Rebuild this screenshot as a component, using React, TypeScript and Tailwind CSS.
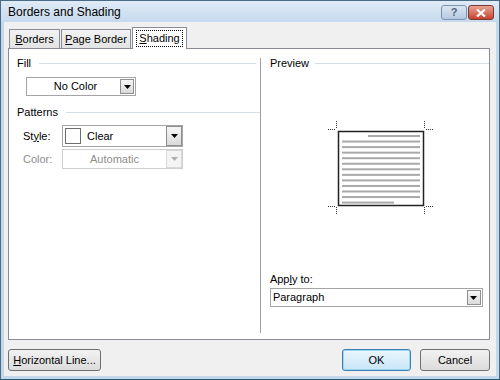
import React from "react";

const font = { fontFamily: '"Segoe UI", "Liberation Sans", Arial, sans-serif' };

function Arrow({ disabled = false }: { disabled?: boolean }) {
  return (
    <svg width="7" height="4" viewBox="0 0 7 4">
      <path d="M0 0 H7 L3.5 4 Z" fill={disabled ? "#b0b0b0" : "#000"} />
    </svg>
  );
}

function ArrowBtn({ disabled = false, className = "" }: { disabled?: boolean; className?: string }) {
  return (
    <div
      className={
        "flex items-center justify-center border " +
        (disabled
          ? "border-[#d8d8d8] bg-[#f4f4f4] "
          : "border-[#8f8f8f] bg-gradient-to-b from-[#f6f6f6] to-[#dadada] ") +
        className
      }
    >
      <Arrow disabled={disabled} />
    </div>
  );
}

function GroupLabel({ label, lineClass }: { label: string; lineClass: string }) {
  return (
    <div className="flex items-center h-[13px]">
      <span className="text-[11px] leading-[13px] text-black">{label}</span>
      <div className={"h-px bg-[#d5dfe5] " + lineClass} />
    </div>
  );
}

function PreviewGraphic() {
  const lines: React.ReactNode[] = [];
  for (let i = 0; i < 13; i++) {
    const y = 4 + i * 5.55;
    let x1 = 4;
    let x2 = 82;
    if (i === 0) x1 = 30;
    if (i === 12) x2 = 56;
    lines.push(<rect key={i} x={x1} y={y} width={x2 - x1} height={2} fill="#a9a9a9" />);
  }
  const dot = "#333";
  return (
    <svg width="110" height="96" viewBox="-12 -12 110 96" className="overflow-visible">
      <g stroke={dot} strokeWidth="1" strokeDasharray="1 1" shapeRendering="crispEdges">
        <line x1="-10" y1="-1.5" x2="-2" y2="-1.5" />
        <line x1="-1.5" y1="-10" x2="-1.5" y2="-2" />
        <line x1="88" y1="-1.5" x2="96" y2="-1.5" />
        <line x1="86.5" y1="-10" x2="86.5" y2="-2" />
        <line x1="-10" y1="75.5" x2="-2" y2="75.5" />
        <line x1="-1.5" y1="76" x2="-1.5" y2="84" />
        <line x1="88" y1="75.5" x2="96" y2="75.5" />
        <line x1="86.5" y1="76" x2="86.5" y2="84" />
      </g>
      <rect x="0.5" y="0.5" width="85" height="74" fill="#fff" stroke="#222" strokeWidth="1.5" />
      {lines}
    </svg>
  );
}

export default function App() {
  return (
    <div
      className="w-[500px] h-[380px] flex flex-col bg-[#c4d8ec] border border-[#4b6a88] border-b-[#1f5a6e] text-black overflow-hidden"
      style={font}
    >
      {/* Title bar */}
      <div className="h-[21px] flex items-center justify-between pl-[7px] pr-[5px] bg-gradient-to-b from-[#e0ebf7] to-[#c6d9ed]">
        <span className="text-[12px] leading-none text-black">Borders and Shading</span>
        <div className="flex items-start gap-[1px] self-start mt-[4px]">
          <div className="w-[26px] h-[15px] rounded-[3px] border border-[#7c93b0] bg-gradient-to-b from-[#dbe6f3] to-[#b4c9e0] flex items-center justify-center">
            <span className="text-[11px] leading-none font-bold text-[#4d6785]">?</span>
          </div>
          <div className="w-[26px] h-[15px] rounded-[3px] border border-[#7a3a30] bg-gradient-to-b from-[#e8a293] to-[#c5412c] flex items-center justify-center">
            <svg width="10" height="8" viewBox="0 0 10 8">
              <path d="M1 0.5 L9 7.5 M9 0.5 L1 7.5" stroke="#fff" strokeWidth="2.2" />
            </svg>
          </div>
        </div>
      </div>

      {/* Content */}
      <div className="flex-1 mx-[3px] mb-[3px] bg-[#f0f0f0] flex flex-col">
        {/* Tabs */}
        <div className="h-[26px] flex items-end pl-[5px]">
          <div className="h-[19px] w-[51px] border border-b-0 border-[#898c95] bg-gradient-to-b from-[#f2f2f2] to-[#e3e3e3] flex items-center justify-center text-[11px] leading-none">
            <span><u>B</u>orders</span>
          </div>
          <div className="h-[19px] w-[70px] ml-[1px] border border-b-0 border-[#898c95] bg-gradient-to-b from-[#f2f2f2] to-[#e3e3e3] flex items-center justify-center text-[11px] leading-none">
            <span><u>P</u>age Border</span>
          </div>
          <div className="relative z-10 h-[22px] w-[55px] ml-[1px] mb-[-1px] border border-b-0 border-[#898c95] bg-white flex items-start justify-center pt-[2px] text-[11px] leading-none">
            <span className="border border-dotted border-black px-[2px] py-[2px]"><u>S</u>hading</span>
          </div>
        </div>

        {/* Panel */}
        <div className="ml-[4px] w-[482px] h-[292px] border border-[#898c95] bg-white flex">
          {/* Left column */}
          <div className="w-[251px] flex flex-col pl-[8px] pt-[8px]">
            <GroupLabel label="Fill" lineClass="ml-[8px] w-[217px]" />
            <div className="ml-[9px] mt-[7px] w-[110px] h-[19px] border border-[#a5a5a5] bg-white flex items-center">
              <span className="flex-1 text-center text-[11px] leading-none pl-[4px]">No Color</span>
              <ArrowBtn className="w-[14px] h-[15px] mr-[1px]" />
            </div>
            <div className="mt-[10px]">
              <GroupLabel label="Patterns" lineClass="ml-[8px] w-[195px]" />
            </div>
            <div className="mt-[6px] flex items-center h-[22px]">
              <span className="w-[45px] pl-[6px] text-[11px] leading-none">St<u>y</u>le:</span>
              <div className="w-[121px] h-[22px] border border-[#a5a5a5] bg-white flex items-center pl-[2px]">
                <div className="w-[16px] h-[16px] border border-[#6e6e6e] bg-white" />
                <span className="flex-1 pl-[6px] text-[11px] leading-none">Clear</span>
                <ArrowBtn className="w-[16px] h-[20px]" />
              </div>
            </div>
            <div className="mt-[2px] flex items-center h-[20px]">
              <span className="w-[45px] pl-[6px] text-[11px] leading-none text-[#8d8d8d]">Color:</span>
              <div className="w-[121px] h-[20px] border border-[#cfcfcf] bg-white flex items-center">
                <span className="flex-1 text-center text-[11px] leading-none text-[#8d8d8d]">Automatic</span>
                <ArrowBtn disabled className="w-[16px] h-[18px]" />
              </div>
            </div>
          </div>

          {/* Divider */}
          <div className="w-px bg-[#a0a0a0] mt-[9px] mb-[6px]" />

          {/* Right column */}
          <div className="flex-1 flex flex-col pl-[9px] pt-[8px]">
            <GroupLabel label="Preview" lineClass="ml-[6px] w-[174px]" />
            <div className="mt-[49px] ml-[56px]">
              <PreviewGraphic />
            </div>
            <div className="mt-[58px] text-[11px] leading-[13px]">
              App<u>l</u>y to:
            </div>
            <div className="mt-[2px] w-[213px] h-[19px] border border-[#a5a5a5] bg-white flex items-center">
              <span className="flex-1 pl-[2px] text-[11px] leading-none">Paragraph</span>
              <ArrowBtn className="w-[14px] h-[15px] mr-[1px]" />
            </div>
          </div>
        </div>

        {/* Bottom buttons */}
        <div className="flex items-center mt-[9px] pl-[4px] pr-[6px]">
          <div className="w-[93px] h-[22px] rounded-[3px] border border-[#707070] bg-gradient-to-b from-[#f2f2f2] to-[#dcdcdc] flex items-center justify-center text-[11px] leading-none">
            <span><u>H</u>orizontal Line...</span>
          </div>
          <div className="flex-1" />
          <div className="w-[69px] h-[22px] rounded-[3px] border border-[#3c7fb1] bg-gradient-to-b from-[#eaf6fd] to-[#c9e6f7] flex items-center justify-center text-[11px] leading-none shadow-[inset_0_0_0_1px_#9fd6f5]">
            OK
          </div>
          <div className="w-[70px] h-[22px] ml-[9px] rounded-[3px] border border-[#707070] bg-gradient-to-b from-[#f2f2f2] to-[#dcdcdc] flex items-center justify-center text-[11px] leading-none">
            Cancel
          </div>
        </div>
      </div>
    </div>
  );
}
